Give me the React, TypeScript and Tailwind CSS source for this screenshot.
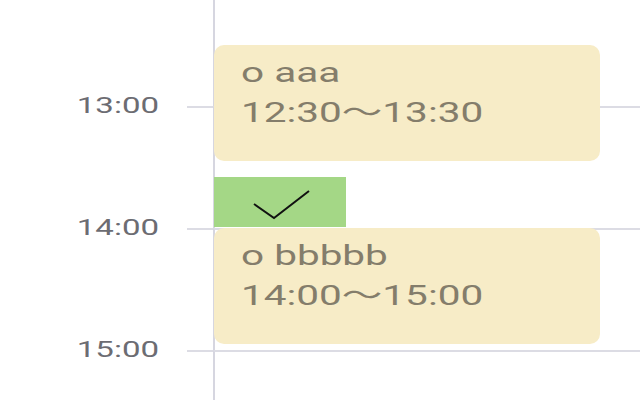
const hours = ["13:00", "14:00", "15:00"];

const events = [
  { title: "o aaa", time: "12:30〜13:30", top: "top-[45px]" },
  { title: "o bbbbb", time: "14:00〜15:00", top: "top-[228px]" },
];

const Row = ({ label, height }: { label?: string; height: string }) => (
  <div className={`flex ${height}`}>
    <div className="w-[187px] shrink-0 pr-[28px] text-right">
      {label && (
        <span className="block origin-right -translate-y-1/2 scale-x-150 text-[22px] leading-[28px] text-[#6c6c72]">
          {label}
        </span>
      )}
    </div>
    <div
      className={`w-[26px] shrink-0 ${label ? "border-t-2 border-[#dcdce4]" : ""}`}
    />
    <div
      className={`flex-1 border-l-2 border-[#d6d6e0] ${label ? "border-t-2 border-t-[#dcdce4]" : ""}`}
    />
  </div>
);

export default function App() {
  return (
    <div className="relative h-[400px] w-[640px] overflow-hidden bg-white font-['Roboto','Noto_Sans_CJK_JP',sans-serif]">
      <Row height="h-[106px]" />
      {hours.map((h) => (
        <Row key={h} label={h} height="h-[122px]" />
      ))}

      {events.map((ev) => (
        <div
          key={ev.title}
          className={`absolute left-[214px] ${ev.top} h-[116px] w-[386px] rounded-[10px] bg-[#f7ecc7] pl-[27px] pt-[8px] text-[27px] leading-[40px] text-[#847d6b]`}
        >
          <div className="origin-left scale-x-150 whitespace-nowrap">
            {ev.title}
          </div>
          <div className="origin-left scale-x-150 whitespace-nowrap">
            {ev.time}
          </div>
        </div>
      ))}

      <div className="absolute left-[214px] top-[177px] h-[50px] w-[132px] bg-[#a4d786]">
        <svg width="132" height="50" viewBox="0 0 132 50" fill="none">
          <path
            d="M40 27 L60 41 L95 14"
            stroke="#111"
            strokeWidth="2"
            strokeLinejoin="miter"
          />
        </svg>
      </div>
    </div>
  );
}
